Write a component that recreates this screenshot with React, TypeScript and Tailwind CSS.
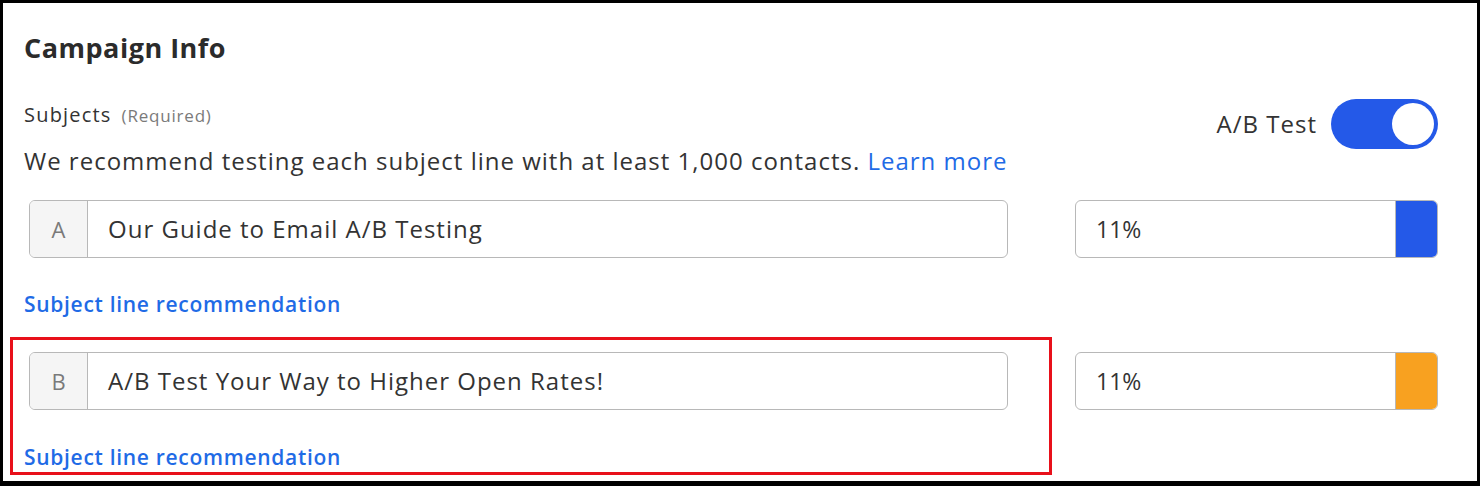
import { useState } from "react";

const font = { fontFamily: "'Open Sans', Lato, Arial, sans-serif" };

type Variant = {
  letter: string;
  subject: string;
  share: string;
  swatch: string;
};

const variants: Variant[] = [
  { letter: "A", subject: "Our Guide to Email A/B Testing", share: "11%", swatch: "bg-[#2459e8]" },
  { letter: "B", subject: "A/B Test Your Way to Higher Open Rates!", share: "11%", swatch: "bg-[#f8a120]" },
];

function SubjectInput({ v }: { v: Variant }) {
  return (
    <div className="ml-[5px] flex h-[58px] w-[979px] rounded-md border border-[#b8b8b8] bg-white overflow-hidden">
      <div className="flex w-[58px] shrink-0 items-center justify-center border-r border-[#b8b8b8] bg-[#f5f5f5] text-[22px] text-[#7a7a7a]">
        {v.letter}
      </div>
      <div className="flex items-center pl-5 text-[24px] tracking-[1px] text-[#333]">{v.subject}</div>
    </div>
  );
}

function ShareInput({ v }: { v: Variant }) {
  return (
    <div className="flex h-[58px] w-[363px] rounded-md border border-[#b8b8b8] bg-white overflow-hidden">
      <div className="flex flex-1 items-center pl-[20px] text-[23px] text-[#333]">{v.share}</div>
      <div className={`w-[42px] border-l border-[#b8b8b8] ${v.swatch}`} />
    </div>
  );
}

function RecLink() {
  return (
    <a href="#" className="text-[21px] font-semibold tracking-[0.7px] text-[#1f6be6]">
      Subject line recommendation
    </a>
  );
}

export default function App() {
  const [abOn, setAbOn] = useState(true);

  return (
    <div
      style={font}
      className="box-border h-[486px] w-[1480px] overflow-hidden border-t-[3px] border-l-[3px] border-r-[3px] border-b-[5px] border-black bg-white"
    >
      <div className="pl-[21px] pt-[29px]">
        <h2 className="text-[27px] font-bold leading-8 tracking-[0.5px] text-[#2b2b2b]">Campaign Info</h2>

        <div className="mt-[39px] flex justify-between pr-[39px]">
          <div>
            <div className="flex items-baseline gap-[10px] leading-6">
              <span className="text-[20px] tracking-[1.2px] text-[#333]">Subjects</span>
              <span className="text-[17px] tracking-[0.8px] text-[#7a7a7a]">(Required)</span>
            </div>
            <p className="mt-[19px] text-[24px] leading-7 tracking-[1px] text-[#333]">
              We recommend testing each subject line with at least 1,000 contacts.{" "}
              <a href="#" className="text-[#1f6be6]">
                Learn more
              </a>
            </p>
          </div>
          <div className="-mt-[4px] flex items-center gap-[14px] self-start">
            <span className="text-[24px] tracking-[1px] text-[#333]">A/B Test</span>
            <button
              onClick={() => setAbOn(!abOn)}
              className={`flex h-[50px] w-[107px] items-center rounded-full px-[4px] ${
                abOn ? "justify-end bg-[#2459e8]" : "justify-start bg-gray-300"
              }`}
            >
              <span className="h-[42px] w-[42px] rounded-full bg-white" />
            </button>
          </div>
        </div>

        {/* row A */}
        <div className="mt-[25px] flex">
          <div className="w-[1030px]">
            <SubjectInput v={variants[0]} />
            <div className="mt-[32px] leading-7">
              <RecLink />
            </div>
          </div>
          <div className="ml-[21px]">
            <ShareInput v={variants[0]} />
          </div>
        </div>

        {/* row B */}
        <div className="mt-[17px] flex">
          <div className="-ml-[14px] h-[138px] w-[1042px] border-[3px] border-[#e8101a] pl-[11px] pt-[12px]">
            <SubjectInput v={variants[1]} />
            <div className="mt-[33px] leading-7">
              <RecLink />
            </div>
          </div>
          <div className="ml-[23px] pt-[15px]">
            <ShareInput v={variants[1]} />
          </div>
        </div>
      </div>
    </div>
  );
}
